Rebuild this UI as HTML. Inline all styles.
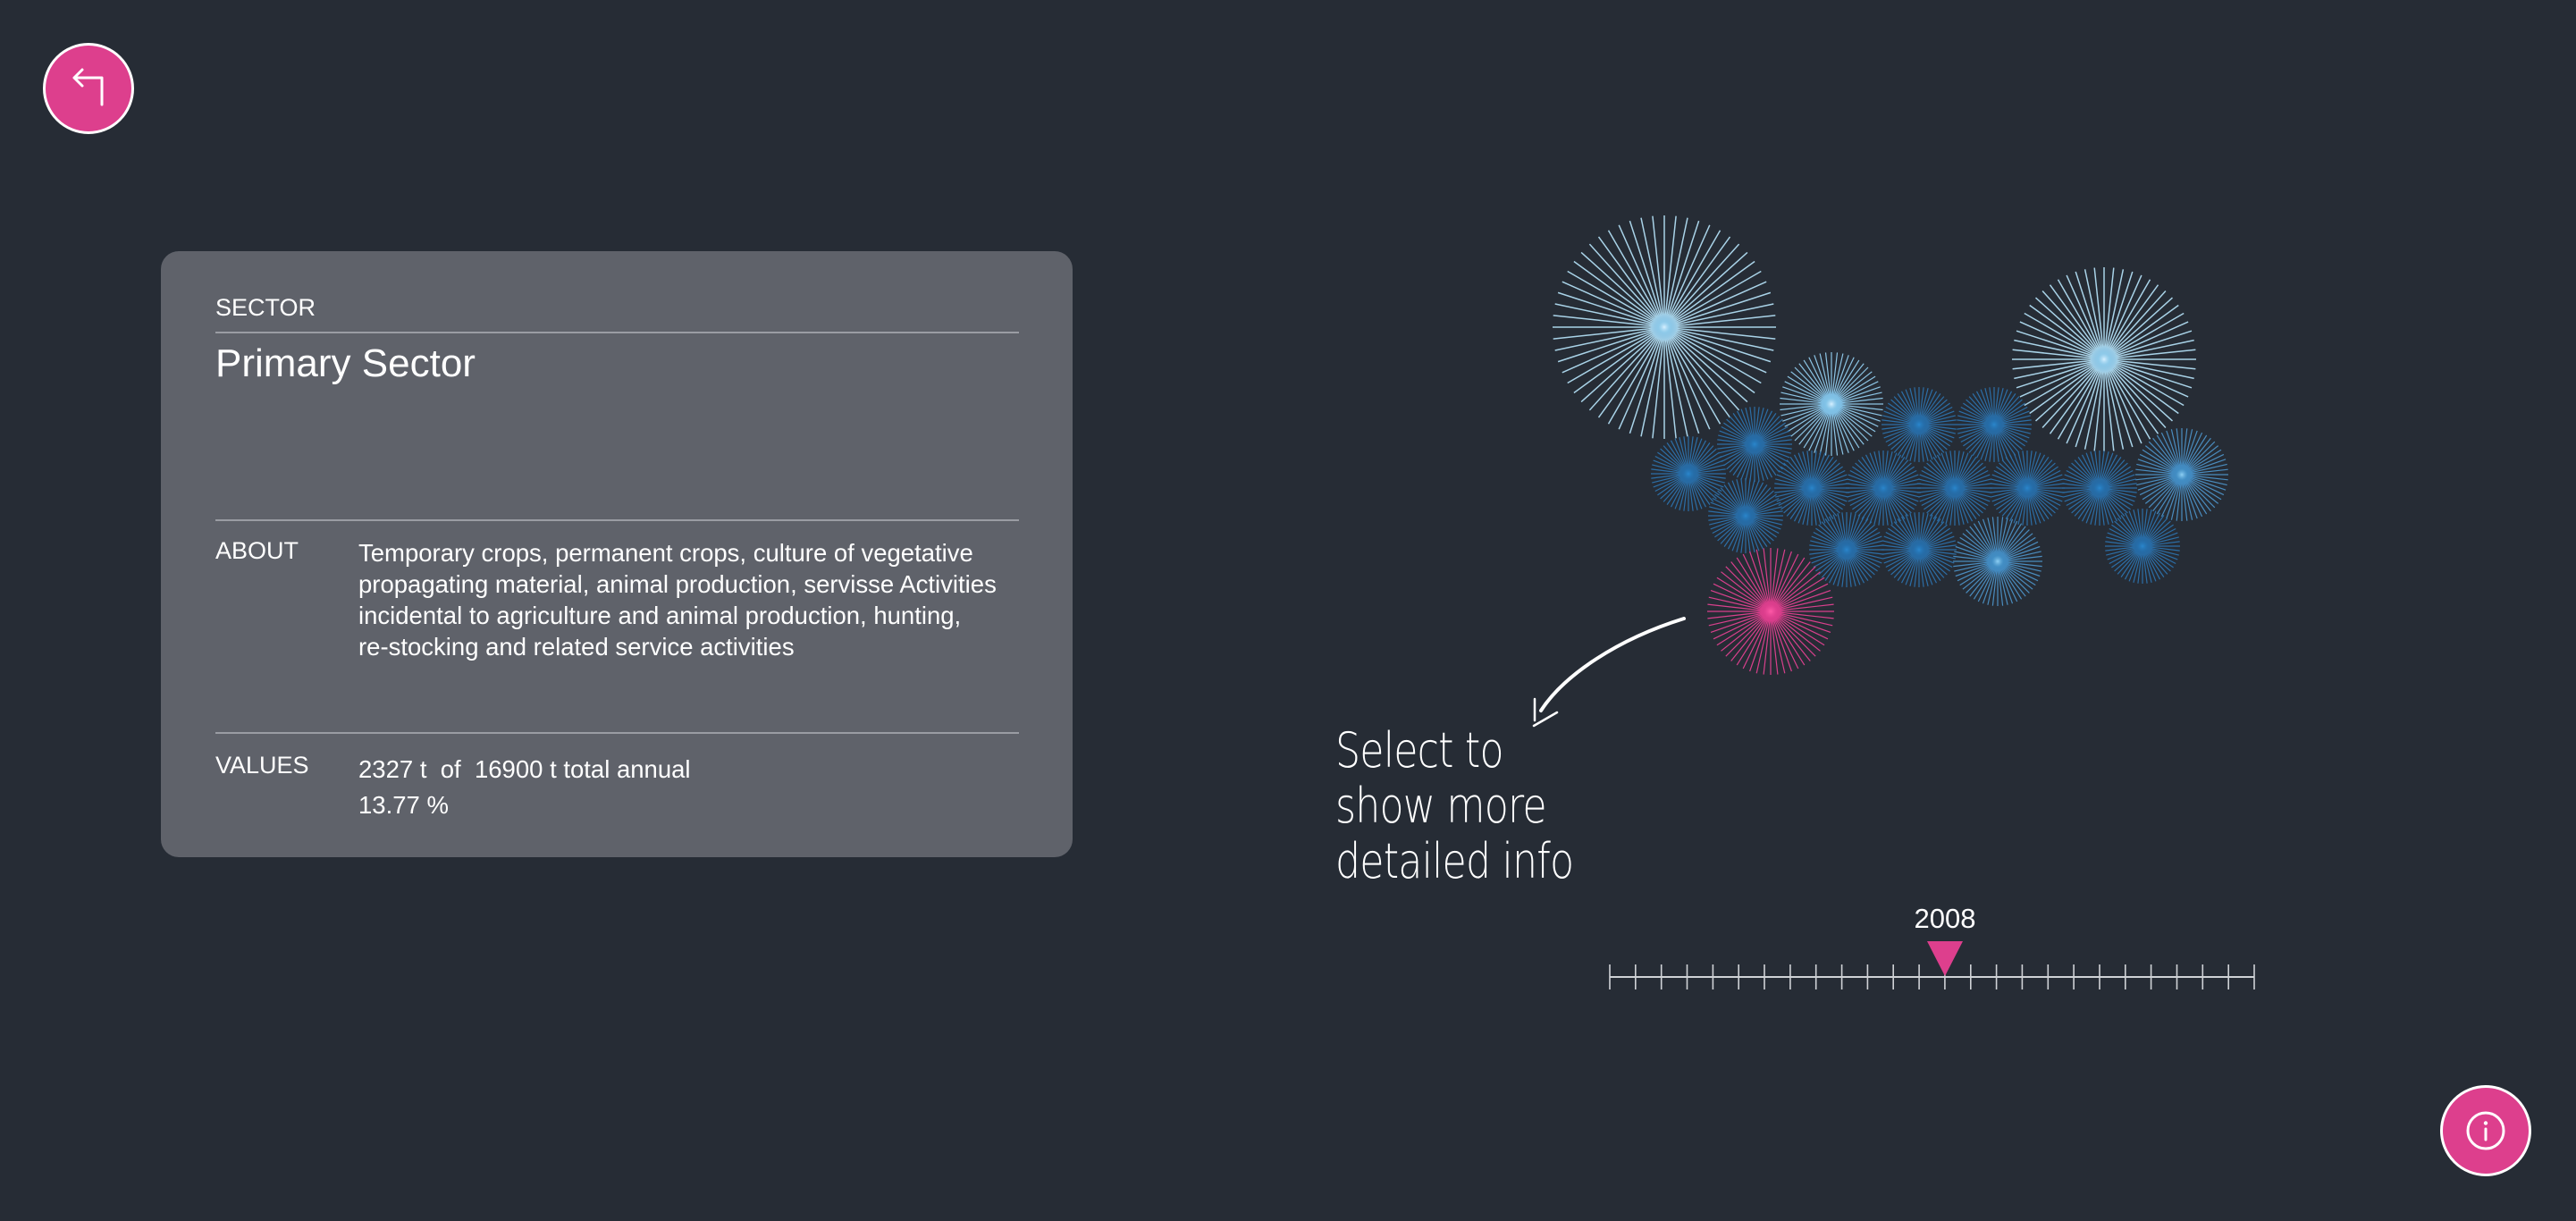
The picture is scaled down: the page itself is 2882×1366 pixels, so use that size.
<!DOCTYPE html>
<html><head><meta charset="utf-8"><style>
html,body{margin:0;padding:0;}
body{width:2882px;height:1366px;background:#262c35;position:relative;overflow:hidden;font-family:"Liberation Sans",sans-serif;color:#fff;}
.card{position:absolute;left:180px;top:281px;width:1020px;height:678px;background:#5f626a;border-radius:20px;}
.t{position:absolute;white-space:nowrap;}
.hr{position:absolute;left:61px;width:899px;height:2px;background:#9a9ca3;}
.lbl{font-size:27px;}
.body{font-size:27.5px;line-height:35px;}
.btn{position:absolute;width:96px;height:96px;border-radius:50%;background:#dd3f8d;border:3px solid #fff;}
.hand{position:absolute;left:1494px;font-family:"DejaVu Sans","Liberation Sans",sans-serif;font-size:54px;font-weight:300;transform:scaleX(0.82);transform-origin:left;white-space:nowrap;letter-spacing:-1px;}
</style></head><body>
<div class="btn" style="left:48px;top:48px;">
<svg width="96" height="96" viewBox="0 0 96 96"><path d="M63 66 V36 H32 M41 27 L32 36 L41 45" fill="none" stroke="#fff" stroke-width="3" stroke-linecap="round" stroke-linejoin="round"/></svg>
</div>
<div class="btn" style="left:2730px;top:1214px;">
<svg width="96" height="96" viewBox="0 0 96 96"><circle cx="48" cy="48" r="20" fill="none" stroke="#fff" stroke-width="3"/><circle cx="48" cy="39.5" r="2.2" fill="#fff"/><path d="M48 46 V58" stroke="#fff" stroke-width="3" stroke-linecap="round"/></svg>
</div>
<div class="card">
<div class="t lbl" style="left:61px;top:48px;">SECTOR</div>
<div class="hr" style="top:90px;"></div>
<div class="t" style="left:61px;top:101px;font-size:44px;">Primary Sector</div>
<div class="hr" style="top:300px;"></div>
<div class="t lbl" style="left:61px;top:320px;">ABOUT</div>
<div class="t body" style="left:221px;top:320px;">Temporary crops, permanent crops, culture of vegetative<br>propagating material, animal production, servisse Activities<br>incidental to agriculture and animal production, hunting,<br>re-stocking and related service activities</div>
<div class="hr" style="top:538px;"></div>
<div class="t lbl" style="left:61px;top:560px;">VALUES</div>
<div class="t body" style="left:221px;top:560px;line-height:40px;">2327 t &nbsp;of &nbsp;16900 t total annual<br>13.77 %</div>
</div>
<svg id="viz" width="2882" height="1366" style="position:absolute;left:0;top:0;">
<defs>
<radialGradient id="gl"><stop offset="0" stop-color="#d8f0ff"/><stop offset="0.4" stop-color="#7cc4ea" stop-opacity="0.6"/><stop offset="1" stop-color="#4aa0d8" stop-opacity="0"/></radialGradient>
<radialGradient id="gm"><stop offset="0" stop-color="#8fd0f4"/><stop offset="0.4" stop-color="#3d8fc8" stop-opacity="0.6"/><stop offset="1" stop-color="#2a78b8" stop-opacity="0"/></radialGradient>
<radialGradient id="gd"><stop offset="0" stop-color="#2a86cc"/><stop offset="0.5" stop-color="#1f6aa8" stop-opacity="0.5"/><stop offset="1" stop-color="#1a5a90" stop-opacity="0"/></radialGradient>
<radialGradient id="gp"><stop offset="0" stop-color="#ff5aa8"/><stop offset="0.5" stop-color="#e03c8e" stop-opacity="0.5"/><stop offset="1" stop-color="#d03080" stop-opacity="0"/></radialGradient>
</defs>
<g id="bursts"></g>
<path d="M1884 692 C1810 715 1750 755 1724 795" fill="none" stroke="#fff" stroke-width="4" stroke-linecap="round"/>
<path d="M1717 782 L1717 806 M1716 812 L1742 797" fill="none" stroke="#fff" stroke-width="2.5" stroke-linecap="round"/>
<line x1="1801" y1="1093" x2="2522" y2="1093" stroke="#cfd2d6" stroke-width="2"/>
<g id="ticks"></g>
<polygon points="2156,1053 2196,1053 2176,1092" fill="#dd3f8d"/>
<text x="2176" y="1038" text-anchor="middle" font-family="Liberation Sans, sans-serif" font-size="31" fill="#fff">2008</text>
</svg>
<div class="hand" style="top:808px;">Select to</div>
<div class="hand" style="top:870px;">show more</div>
<div class="hand" style="top:932px;">detailed info</div>
<script>
var ns="http://www.w3.org/2000/svg";
var g=document.getElementById("bursts");
var B=[
[1862,366,125,"#a9d3e8","gl",60],
[2354,402,103,"#a9d3e8","gl",60],
[2049,452,58,"#8cc4e4","gl",56],
[2147,475,42,"#2c6ea6","gd",52],
[2231,475,42,"#2c6ea6","gd",52],
[1963,497,42,"#2c6ea6","gd",52],
[1889,530,42,"#2c6ea6","gd",52],
[2027,546,42,"#2c6ea6","gd",52],
[2107,546,42,"#2c6ea6","gd",52],
[2187,546,42,"#2c6ea6","gd",52],
[2268,546,42,"#2c6ea6","gd",52],
[2349,546,42,"#2c6ea6","gd",52],
[2441,531,52,"#4a8cbe","gm",56],
[1953,577,42,"#2c6ea6","gd",52],
[2066,615,42,"#2c6ea6","gd",52],
[2147,615,42,"#2c6ea6","gd",52],
[2235,628,50,"#4a8cbe","gm",56],
[2397,611,42,"#2c6ea6","gd",52],
[1981,684,71,"#d8408c","gp",56]];
B.forEach(function(b){
  var s="";
  for(var i=0;i<b[5];i++){var a=i/b[5]*Math.PI*2;s+="M"+b[0]+" "+b[1]+"L"+(b[0]+Math.cos(a)*b[2]).toFixed(1)+" "+(b[1]+Math.sin(a)*b[2]).toFixed(1);}
  var p=document.createElementNS(ns,"path");p.setAttribute("d",s);p.setAttribute("stroke",b[3]);p.setAttribute("stroke-width",b[2]>90?"1.5":"1.2");p.setAttribute("fill","none");g.appendChild(p);
  var c=document.createElementNS(ns,"circle");c.setAttribute("cx",b[0]);c.setAttribute("cy",b[1]);c.setAttribute("r",Math.min(16,b[2]*0.32));c.setAttribute("fill","url(#"+b[4]+")");g.appendChild(c);
});
var t=document.getElementById("ticks"),s="";
for(var i=0;i<26;i++){var x=(1801+i*28.84).toFixed(1);s+="M"+x+" 1079V1107";}
var tp=document.createElementNS(ns,"path");tp.setAttribute("d",s);tp.setAttribute("stroke","#cfd2d6");tp.setAttribute("stroke-width","1.6");t.appendChild(tp);
</script>
</body></html>
